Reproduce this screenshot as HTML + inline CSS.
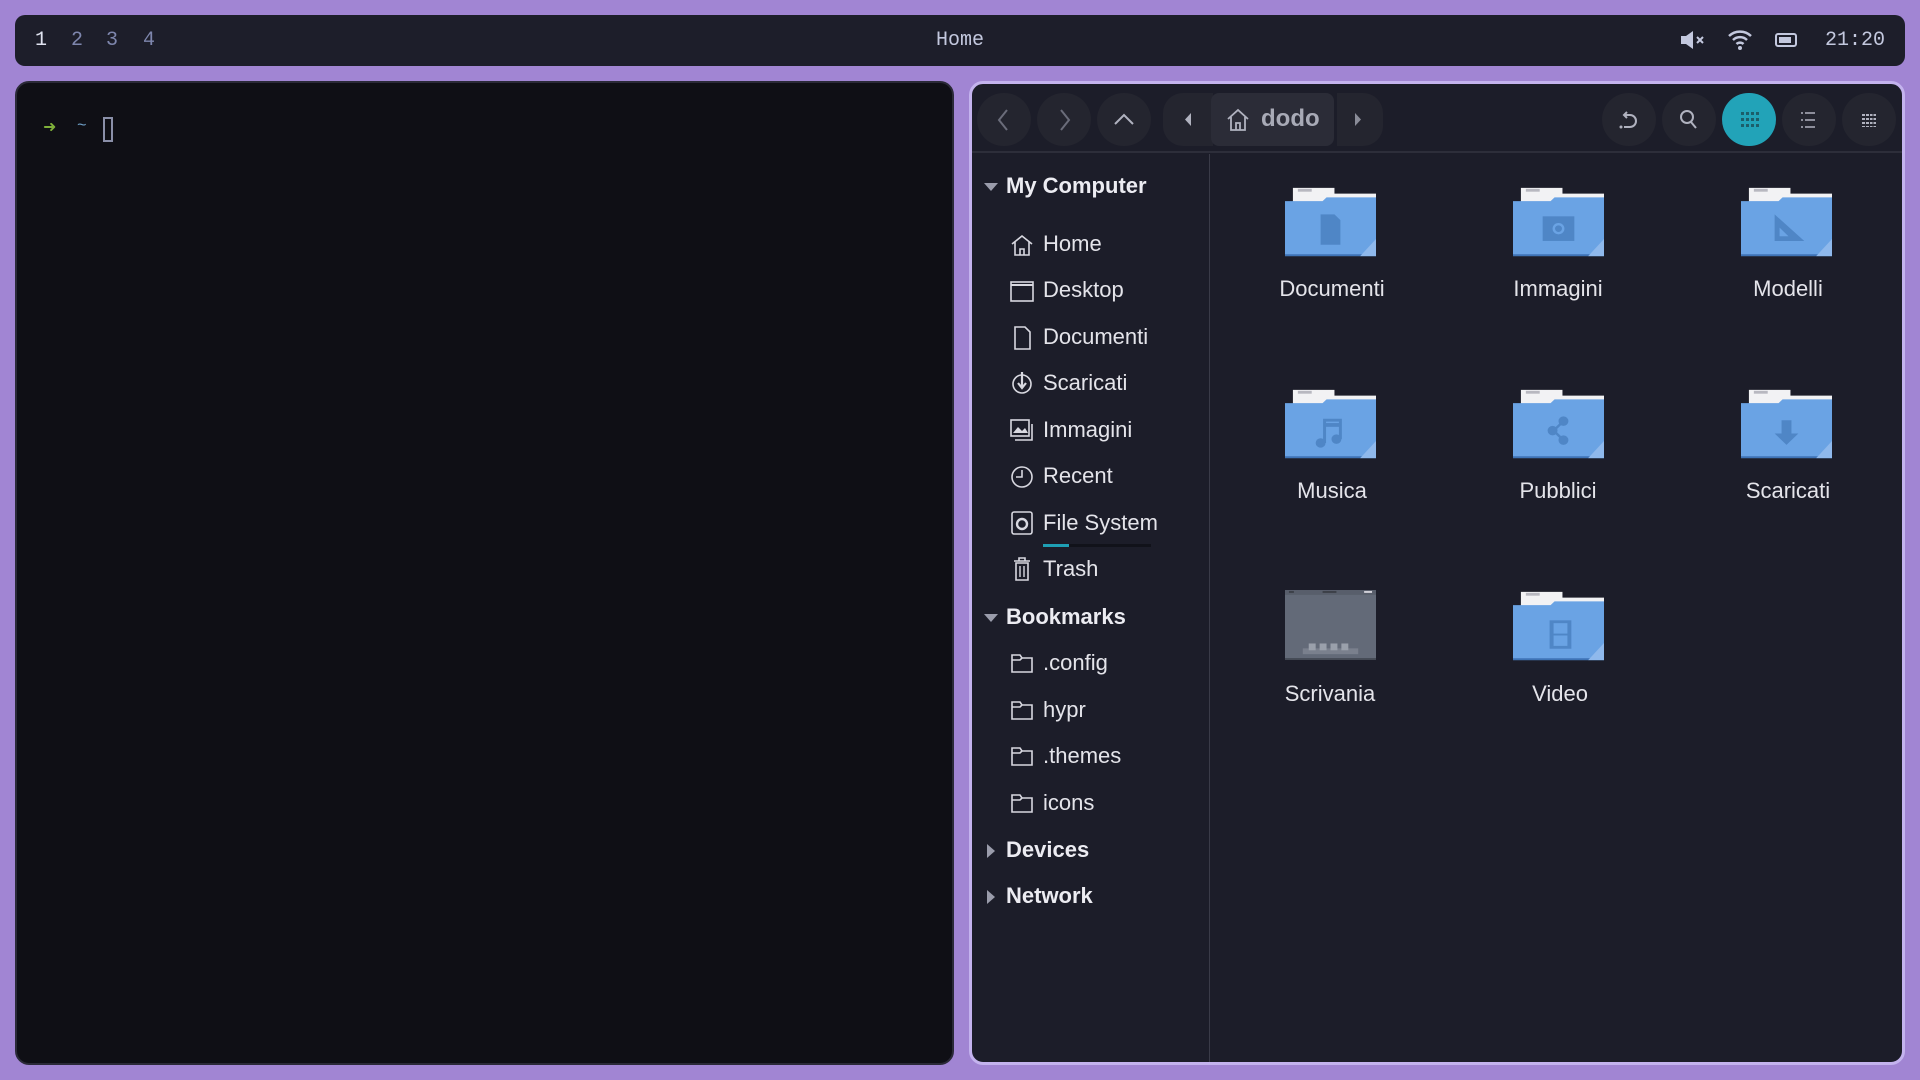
<!DOCTYPE html>
<html><head><meta charset="utf-8"><style>
*{margin:0;padding:0;box-sizing:border-box}
body{width:1920px;height:1080px;background:#a185d3;position:relative;overflow:hidden;font-family:"Liberation Sans",sans-serif}
.bar{position:absolute;left:15px;top:15px;width:1890px;height:51px;background:#1d1e2a;border-radius:10px;font-family:"Liberation Mono",monospace;font-size:20px;color:#c3c8de}
.bar span{position:absolute;top:14px}
.term{position:absolute;left:15px;top:81px;width:939px;height:984px;background:#0f0f15;border-radius:14px;border:2px solid #2b2a38}
.fm{position:absolute;left:969px;top:81px;width:936px;height:984px;background:#1c1d29;border-radius:14px;border:3px solid #c4b3ee}
.btn{position:absolute;top:9px;width:54px;height:53px;border-radius:27px;background:#24252f}
.side{position:absolute;left:0;top:70px;width:238px;bottom:0;border-right:1px solid #3a3b48}
.hline{position:absolute;left:0;right:0;top:67px;height:2px;background:#2d2e3a}
.it{position:absolute;font-size:22px;color:#e4e4ea;left:71px}
.hd{position:absolute;font-size:22px;font-weight:bold;color:#ececf2;left:34px}
.ic{position:absolute;left:38px;width:24px;height:24px}
.tri{position:absolute;left:12px;width:0;height:0}
.lbl{position:absolute;width:200px;text-align:center;font-size:22px;color:#e4e4ea}
.fo{position:absolute}
</style></head><body>
<div class="bar">
<span style="left:20px;color:#e0e3f0">1</span><span style="left:56px;color:#7e86ad">2</span><span style="left:91px;color:#7e86ad">3</span><span style="left:128px;color:#7e86ad">4</span>
<span style="left:921px">Home</span>
<svg style="position:absolute;left:1664px;top:14px" width="26" height="22" viewBox="0 0 26 22"><path d="M2 7h5l7-5v18l-7-5H2z" fill="#c3c8de"/><path d="M18 8l6 6M24 8l-6 6" stroke="#c3c8de" stroke-width="2"/></svg>
<svg style="position:absolute;left:1712px;top:13px" width="26" height="24" viewBox="0 0 26 24"><path d="M2 8a16 16 0 0 1 22 0M6 12a10 10 0 0 1 14 0M9.5 16a5 5 0 0 1 7 0" stroke="#c3c8de" stroke-width="2.5" fill="none"/><circle cx="13" cy="20" r="2" fill="#c3c8de"/></svg>
<svg style="position:absolute;left:1760px;top:16px" width="24" height="18" viewBox="0 0 24 18"><rect x="1" y="3" width="20" height="12" rx="2" stroke="#c3c8de" stroke-width="2" fill="none"/><rect x="4" y="6" width="12" height="6" fill="#c3c8de"/></svg>
<span style="left:1810px">21:20</span>
</div>
<div class="term">
<span style="position:absolute;left:26px;top:34px;color:#7fb03a;font-size:16px">➜</span>
<span style="position:absolute;left:60px;top:34px;color:#6fa0c8;font-size:16px;font-family:'Liberation Mono',monospace">~</span>
<div style="position:absolute;left:86px;top:34px;width:10px;height:25px;border:2px solid #8a8fa8"></div>
</div>
<div class="fm">
<div class="btn" style="left:5px"><svg width="54" height="53"><path d="M30 17l-8 10 8 10" stroke="#6a6c7a" stroke-width="2" fill="none"/></svg></div>
<div class="btn" style="left:65px"><svg width="54" height="53"><path d="M24 17l8 10-8 10" stroke="#6a6c7a" stroke-width="2" fill="none"/></svg></div>
<div class="btn" style="left:125px"><svg width="54" height="53"><path d="M18 31l9-9 9 9" stroke="#b0b2bf" stroke-width="2" fill="none"/></svg></div>
<div class="btn" style="left:191px;width:50px;border-radius:20px 0 0 20px"><svg width="50" height="53"><path d="M28 20v13l-6-6.5z" fill="#b0b2bf"/></svg></div>
<div class="btn" style="left:239px;width:123px;border-radius:8px;background:#2b2c37"><svg style="position:absolute;left:14px;top:14px" width="26" height="26" viewBox="0 0 26 26"><path d="M3 12L13 3l10 9M6 10v13h14V10M11 23v-7h4v7" stroke="#b0b2bf" stroke-width="1.8" fill="none"/></svg><span style="position:absolute;left:50px;top:12px;font-size:24px;font-weight:bold;color:#a8aab6">dodo</span></div>
<div class="btn" style="left:365px;width:46px;border-radius:0 20px 20px 0"><svg width="46" height="53"><path d="M18 20v13l6-6.5z" fill="#8a8c98"/></svg></div>
<div class="btn" style="left:630px"><svg width="54" height="53"><path d="M22 34h6a6 6 0 0 0 0-12h-5M25 19l-3 3 3 3" stroke="#b0b2bf" stroke-width="2" fill="none"/><circle cx="19" cy="34" r="1.5" fill="#b0b2bf"/></svg></div>
<div class="btn" style="left:690px"><svg width="54" height="53"><circle cx="25" cy="24" r="6" stroke="#b0b2bf" stroke-width="2" fill="none"/><path d="M29 29l5 6" stroke="#b0b2bf" stroke-width="2"/></svg></div>
<div class="btn" style="left:750px;background:#22a3b8"><svg width="54" height="53"><g fill="#1c5e6a"><rect x="19" y="19" width="3" height="3"/><rect x="24" y="19" width="3" height="3"/><rect x="29" y="19" width="3" height="3"/><rect x="34" y="19" width="3" height="3"/><rect x="19" y="25" width="3" height="3"/><rect x="24" y="25" width="3" height="3"/><rect x="29" y="25" width="3" height="3"/><rect x="34" y="25" width="3" height="3"/><rect x="19" y="31" width="3" height="3"/><rect x="24" y="31" width="3" height="3"/><rect x="29" y="31" width="3" height="3"/><rect x="34" y="31" width="3" height="3"/></g></svg></div>
<div class="btn" style="left:810px"><svg width="54" height="53"><path d="M23 20h10M23 27h10M23 34h10M19 20h2M19 27h2M19 34h2" stroke="#b0b2bf" stroke-width="1.5"/></svg></div>
<div class="btn" style="left:870px"><svg width="54" height="53"><g fill="#b0b2bf"><rect x="20" y="21" width="14" height="2"/><rect x="20" y="25" width="14" height="2"/><rect x="20" y="29" width="14" height="2"/><rect x="20" y="33" width="14" height="1"/></g><path d="M23.5 20v15M27.5 20v15M31 20v15" stroke="#24252f" stroke-width="1"/></svg></div>
<div class="hline"></div>
<div class="side">
<div class="tri" style="top:29px;border-left:7px solid transparent;border-right:7px solid transparent;border-top:8px solid #9a9cab"></div>
<div class="hd" style="top:19px">My Computer</div>
<svg class="ic" style="top:79px" viewBox="0 0 24 24"><path d="M2 11L12 3l10 8M5 9v13h14V9M10 22v-6h4v6" stroke="#d8d8e0" stroke-width="1.6" fill="none"/></svg><div class="it" style="top:77px">Home</div>
<svg class="ic" style="top:126px" viewBox="0 0 24 24"><rect x="1" y="2" width="22" height="19" stroke="#d8d8e0" stroke-width="1.6" fill="none"/><path d="M1 5h22" stroke="#d8d8e0" stroke-width="2"/></svg><div class="it" style="top:123px">Desktop</div>
<svg class="ic" style="top:172px" viewBox="0 0 24 24"><path d="M5 1h10l5 5v17H5z" stroke="#d8d8e0" stroke-width="1.6" fill="none"/></svg><div class="it" style="top:170px">Documenti</div>
<svg class="ic" style="top:217px" viewBox="0 0 24 24"><circle cx="12" cy="13" r="9" stroke="#d8d8e0" stroke-width="1.6" fill="none"/><path d="M12 1v16M8 12l4 5 4-5" stroke="#d8d8e0" stroke-width="2.2" fill="none"/></svg><div class="it" style="top:216px">Scaricati</div>
<svg class="ic" style="top:264px" viewBox="0 0 24 24"><rect x="1" y="2" width="18" height="16" stroke="#d8d8e0" stroke-width="1.6" fill="none"/><path d="M22 6v16H5" stroke="#d8d8e0" stroke-width="1.6" fill="none"/><path d="M3 15l5-6 4 4 3-3 3 5z" fill="#d8d8e0"/></svg><div class="it" style="top:263px">Immagini</div>
<svg class="ic" style="top:311px" viewBox="0 0 24 24"><circle cx="12" cy="12" r="10" stroke="#d8d8e0" stroke-width="1.6" fill="none"/><path d="M12 5v7H6" stroke="#d8d8e0" stroke-width="1.6" fill="none"/></svg><div class="it" style="top:309px">Recent</div>
<svg class="ic" style="top:357px" viewBox="0 0 24 24"><rect x="2" y="1" width="20" height="22" rx="2" stroke="#d8d8e0" stroke-width="1.6" fill="none"/><circle cx="12" cy="13" r="5" stroke="#d8d8e0" stroke-width="2.4" fill="none"/></svg><div class="it" style="top:356px">File System</div>
<div style="position:absolute;left:71px;top:390px;width:108px;height:3px;background:#11121a"><div style="width:26px;height:3px;background:#1e9fb4"></div></div>
<svg class="ic" style="top:403px" viewBox="0 0 24 24"><path d="M4 4h16M9 4V1h6v3M6 6h12v17H6z" stroke="#d8d8e0" stroke-width="1.6" fill="none"/><path d="M10 9v11M14 9v11" stroke="#d8d8e0" stroke-width="1.4"/></svg><div class="it" style="top:402px">Trash</div>
<div class="tri" style="top:460px;border-left:7px solid transparent;border-right:7px solid transparent;border-top:8px solid #9a9cab"></div>
<div class="hd" style="top:450px">Bookmarks</div>
<svg class="ic" style="top:497px" viewBox="0 0 24 24"><path d="M2 4h8l2 3h10v14H2z M2 9h8l2-2" stroke="#d8d8e0" stroke-width="1.6" fill="none"/></svg><div class="it" style="top:496px">.config</div>
<svg class="ic" style="top:544px" viewBox="0 0 24 24"><path d="M2 4h8l2 3h10v14H2z M2 9h8l2-2" stroke="#d8d8e0" stroke-width="1.6" fill="none"/></svg><div class="it" style="top:543px">hypr</div>
<svg class="ic" style="top:590px" viewBox="0 0 24 24"><path d="M2 4h8l2 3h10v14H2z M2 9h8l2-2" stroke="#d8d8e0" stroke-width="1.6" fill="none"/></svg><div class="it" style="top:589px">.themes</div>
<svg class="ic" style="top:637px" viewBox="0 0 24 24"><path d="M2 4h8l2 3h10v14H2z M2 9h8l2-2" stroke="#d8d8e0" stroke-width="1.6" fill="none"/></svg><div class="it" style="top:636px">icons</div>
<div class="tri" style="top:690px;left:15px;border-top:7px solid transparent;border-bottom:7px solid transparent;border-left:8px solid #9a9cab"></div>
<div class="hd" style="top:683px">Devices</div>
<div class="tri" style="top:736px;left:15px;border-top:7px solid transparent;border-bottom:7px solid transparent;border-left:8px solid #9a9cab"></div>
<div class="hd" style="top:729px">Network</div>
</div>
<svg width="0" height="0" style="position:absolute"><defs><g id="fd"><path d="M8 2h42v6H92v14H8z" fill="#f2f2f4"/><rect x="13" y="3" width="14" height="3" fill="#b8b8c0"/><path d="M0 16h38l4-4h50v62H0z" fill="#6aa3e4"/><path d="M0 72h92v2H0z" fill="#3e73b5"/><path d="M92 56v18H76z" fill="#8fb9ec"/></g></defs></svg>
<svg class="fo" style="left:313px;top:102px" width="91" height="72" viewBox="0 0 92 76" preserveAspectRatio="none"><use href="#fd"/><path d="M36 30h14l6 6v26H36z" fill="#4f86c6"/></svg>
<div class="lbl" style="left:260px;top:192px">Documenti</div>
<svg class="fo" style="left:541px;top:102px" width="91" height="72" viewBox="0 0 92 76" preserveAspectRatio="none"><use href="#fd"/><rect x="30" y="32" width="32" height="26" fill="#4f86c6"/><circle cx="46" cy="45" r="6" fill="#6aa3e4"/><circle cx="46" cy="45" r="3.5" fill="#4f86c6"/></svg>
<div class="lbl" style="left:486px;top:192px">Immagini</div>
<svg class="fo" style="left:769px;top:102px" width="91" height="72" viewBox="0 0 92 76" preserveAspectRatio="none"><use href="#fd"/><path d="M34 30v28h30z" fill="#4f86c6"/><path d="M39 44v9h9z" fill="#6aa3e4"/></svg>
<div class="lbl" style="left:716px;top:192px">Modelli</div>
<svg class="fo" style="left:313px;top:304px" width="91" height="72" viewBox="0 0 92 76" preserveAspectRatio="none"><use href="#fd"/><path d="M40 58V34h16v20" stroke="#4f86c6" stroke-width="3" fill="none"/><path d="M40 39h16" stroke="#4f86c6" stroke-width="4"/><circle cx="36" cy="58" r="5" fill="#4f86c6"/><circle cx="52" cy="54" r="5" fill="#4f86c6"/></svg>
<div class="lbl" style="left:260px;top:394px">Musica</div>
<svg class="fo" style="left:541px;top:304px" width="91" height="72" viewBox="0 0 92 76" preserveAspectRatio="none"><use href="#fd"/><path d="M51 35l-10 10 10 10" stroke="#4f86c6" stroke-width="2.5" fill="none"/><circle cx="51" cy="35" r="5" fill="#4f86c6"/><circle cx="40" cy="45" r="5" fill="#4f86c6"/><circle cx="51" cy="55" r="5" fill="#4f86c6"/></svg>
<div class="lbl" style="left:486px;top:394px">Pubblici</div>
<svg class="fo" style="left:769px;top:304px" width="91" height="72" viewBox="0 0 92 76" preserveAspectRatio="none"><use href="#fd"/><path d="M41 34h10v14h7L46 60 34 48h7z" fill="#4f86c6"/></svg>
<div class="lbl" style="left:716px;top:394px">Scaricati</div>
<svg class="fo" style="left:313px;top:506px" width="91" height="70" viewBox="0 0 92 72" preserveAspectRatio="none"><rect width="92" height="72" fill="#636a78"/><rect x="0" y="0" width="92" height="5" fill="#585e6b"/><rect x="38" y="1" width="14" height="2" fill="#3c4048"/><rect x="4" y="1" width="5" height="2" fill="#3c4048"/><rect x="80" y="1" width="8" height="2" fill="#d0d0d8"/><rect x="18" y="60" width="56" height="6" fill="#7a808d"/><rect x="24" y="55" width="7" height="7" fill="#9aa0ab"/><rect x="35" y="55" width="7" height="7" fill="#9aa0ab"/><rect x="46" y="55" width="7" height="7" fill="#9aa0ab"/><rect x="57" y="55" width="7" height="7" fill="#9aa0ab"/><rect x="0" y="70" width="92" height="2" fill="#454a55"/></svg>
<div class="lbl" style="left:258px;top:597px">Scrivania</div>
<svg class="fo" style="left:541px;top:506px" width="91" height="72" viewBox="0 0 92 76" preserveAspectRatio="none"><use href="#fd"/><rect x="37" y="32" width="22" height="30" fill="#4f86c6"/><rect x="41" y="35" width="14" height="11" fill="#6aa3e4"/><rect x="41" y="48" width="14" height="11" fill="#6aa3e4"/></svg>
<div class="lbl" style="left:488px;top:597px">Video</div>
</div>
</body></html>
